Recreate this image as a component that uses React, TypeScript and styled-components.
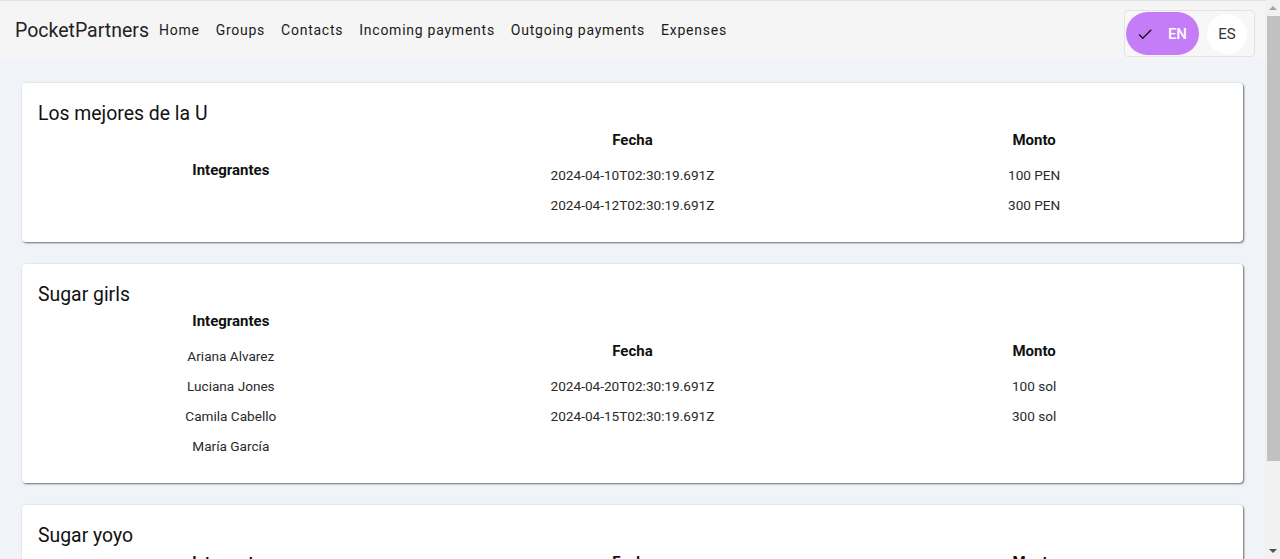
import React from 'react';
import styled, { createGlobalStyle } from 'styled-components';

interface Payment {
  date: string;
  amount: string;
}

interface Group {
  name: string;
  members: string[];
  payments: Payment[];
}

const groups: Group[] = [
  {
    name: 'Los mejores de la U',
    members: [],
    payments: [
      { date: '2024-04-10T02:30:19.691Z', amount: '100 PEN' },
      { date: '2024-04-12T02:30:19.691Z', amount: '300 PEN' },
    ],
  },
  {
    name: 'Sugar girls',
    members: ['Ariana Alvarez', 'Luciana Jones', 'Camila Cabello', 'María García'],
    payments: [
      { date: '2024-04-20T02:30:19.691Z', amount: '100 sol' },
      { date: '2024-04-15T02:30:19.691Z', amount: '300 sol' },
    ],
  },
  {
    name: 'Sugar yoyo',
    members: ['Valeria Torres', 'Lucía Ramos'],
    payments: [
      { date: '2024-04-18T02:30:19.691Z', amount: '250 PEN' },
      { date: '2024-04-19T02:30:19.691Z', amount: '80 PEN' },
    ],
  },
];

const GlobalStyle = createGlobalStyle`
  body {
    margin: 0;
    padding-right: 15px;
    background: #f0f4f8;
    font-family: Roboto, "Liberation Sans", Arial, sans-serif;
    color: #1f1f1f;
  }
`;

// browser-like scrollbar drawn over the right edge
const ScrollTrack = styled.div`
  position: fixed;
  top: 0;
  right: 0;
  bottom: 0;
  width: 15px;
  background: #f1f1f1;
  display: flex;
  flex-direction: column;
  align-items: center;
`;

const ScrollArrow = styled.div<{ $down?: boolean }>`
  height: 16px;
  display: flex;
  align-items: center;
  justify-content: center;
  &::after {
    content: '';
    border-left: 4px solid transparent;
    border-right: 4px solid transparent;
    ${(p) => (p.$down ? 'border-top: 4px solid #505050;' : 'border-bottom: 4px solid #a3a3a3;')}
  }
`;

const ScrollThumb = styled.div`
  width: 13px;
  height: 445px;
  margin-left: 2px;
  background: #c1c1c1;
`;

const ScrollSpacer = styled.div`
  flex: 1;
`;

const Toolbar = styled.header`
  display: flex;
  align-items: center;
  height: 58px;
  padding: 0 15px;
  background: #f5f5f5;
  border-top: 1px solid #e2e2e2;
`;

const Brand = styled.div`
  font-size: 19.5px;
  color: #222;
  margin-right: 2px;
`;

const Nav = styled.nav`
  display: flex;
  align-items: center;
  flex: 1;
`;

const NavLink = styled.a`
  padding: 6px 8px;
  font-size: 14px;
  font-weight: 400;
  letter-spacing: 0.75px;
  color: #1a1a1a;
  cursor: pointer;
`;

const LangToggle = styled.div`
  display: flex;
  align-items: center;
  gap: 8px;
  margin-top: 7px;
  padding: 1px 7px 1px 1px;
  border: 1px solid #e3e3e3;
  border-radius: 4px;
  background: #f7f7f7;
  margin-right: -5px;
`;

const LangButton = styled.button<{ $active?: boolean }>`
  display: flex;
  align-items: center;
  justify-content: center;
  gap: 14px;
  height: ${(p) => (p.$active ? '43px' : '40px')};
  min-width: 40px;
  padding: ${(p) => (p.$active ? '0 12px 0 10px' : '0')};
  border: none;
  border-radius: 22px;
  background: ${(p) => (p.$active ? '#c47cf7' : '#fff')};
  color: ${(p) => (p.$active ? '#fff' : '#333')};
  font-family: Roboto, "Liberation Sans", Arial, sans-serif;
  font-size: 15px;
  font-weight: ${(p) => (p.$active ? 500 : 400)};
  cursor: pointer;
`;

const Main = styled.main`
  display: flex;
  flex-direction: column;
  gap: 22px;
  padding: 24px 22px;
`;

const Card = styled.section`
  background: #fff;
  border-radius: 4px;
  padding: 17px 8px 22px;
  box-shadow: 1px 1px 2px rgba(0, 0, 0, 0.55), 0 0 3px rgba(0, 0, 0, 0.06);
`;

const Title = styled.h2`
  margin: 0;
  padding-left: 8px;
  font-size: 19.4px;
  font-weight: 400;
  line-height: 28px;
  color: #111;
`;

const Columns = styled.div`
  display: grid;
  grid-template-columns: repeat(3, 1fr);
  align-items: center;
  margin-top: -8px;
`;

const Column = styled.div`
  display: flex;
  flex-direction: column;
  align-items: center;
`;

const ColumnHead = styled.div`
  height: 40px;
  display: flex;
  align-items: center;
  font-size: 15px;
  font-weight: 700;
  color: #111;
`;

const Cell = styled.div`
  height: 30px;
  display: flex;
  align-items: center;
  font-size: 13.6px;
  color: #2a2a2a;
`;

function CheckIcon() {
  return (
    <svg width="18" height="18" viewBox="0 0 24 24">
      <path d="M9 16.17 4.83 12l-1.42 1.41L9 19 21 7l-1.41-1.41z" fill="#1d1b20" />
    </svg>
  );
}

function App() {
  const links = ['Home', 'Groups', 'Contacts', 'Incoming payments', 'Outgoing payments', 'Expenses'];

  return (
    <>
      <GlobalStyle />
      <Toolbar>
        <Brand>PocketPartners</Brand>
        <Nav>
          {links.map((l) => (
            <NavLink key={l}>{l}</NavLink>
          ))}
        </Nav>
        <LangToggle>
          <LangButton $active>
            <CheckIcon />
            EN
          </LangButton>
          <LangButton>ES</LangButton>
        </LangToggle>
      </Toolbar>
      <Main>
        {groups.map((g) => (
          <Card key={g.name}>
            <Title>{g.name}</Title>
            <Columns>
              <Column>
                <ColumnHead>Integrantes</ColumnHead>
                {g.members.map((m) => (
                  <Cell key={m}>{m}</Cell>
                ))}
              </Column>
              <Column>
                <ColumnHead>Fecha</ColumnHead>
                {g.payments.map((p) => (
                  <Cell key={p.date}>{p.date}</Cell>
                ))}
              </Column>
              <Column>
                <ColumnHead>Monto</ColumnHead>
                {g.payments.map((p) => (
                  <Cell key={p.date}>{p.amount}</Cell>
                ))}
              </Column>
            </Columns>
          </Card>
        ))}
      </Main>
      <ScrollTrack>
        <ScrollArrow />
        <ScrollThumb />
        <ScrollSpacer />
        <ScrollArrow $down />
      </ScrollTrack>
    </>
  );
}

export default App;
